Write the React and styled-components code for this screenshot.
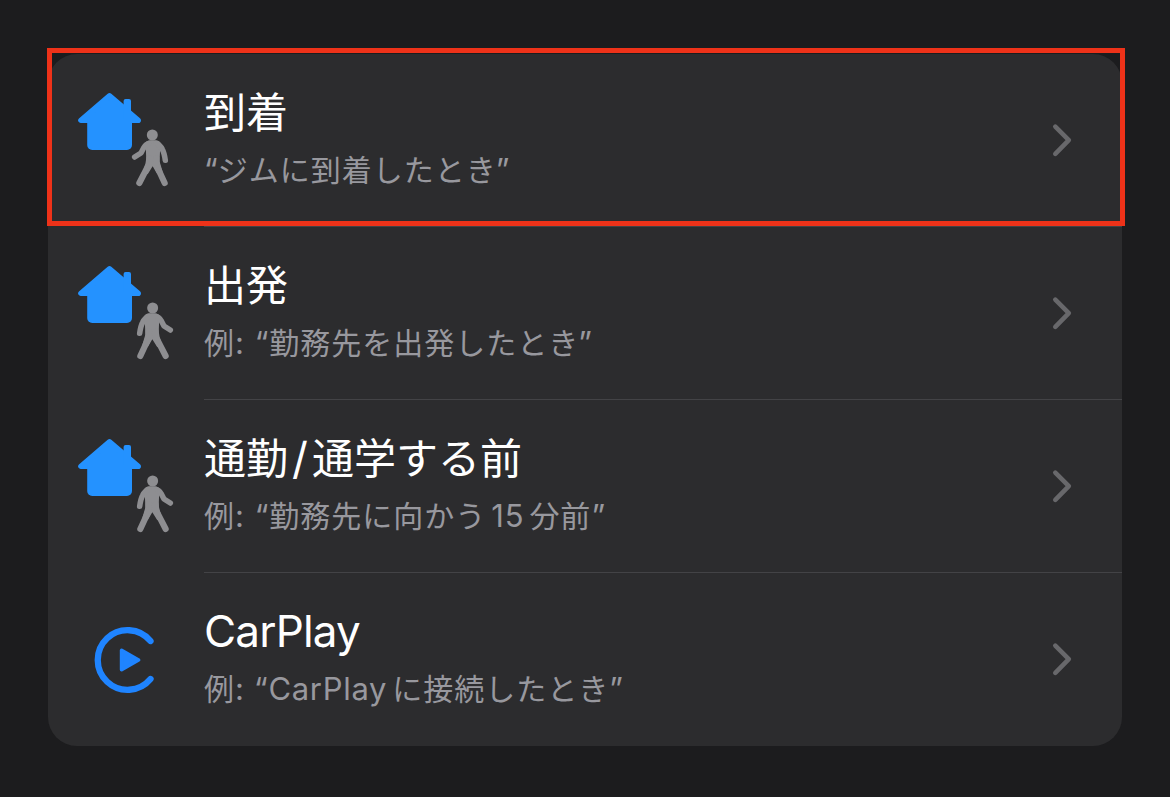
import React from 'react';
import styled, { createGlobalStyle } from 'styled-components';

const GlobalStyle = createGlobalStyle`
  * {
    box-sizing: border-box;
  }

  body {
    margin: 0;
    background: #1c1c1e;
    font-family: Inter, 'Noto Sans CJK JP', sans-serif;
  }
`;

const Page = styled.main`
  height: 797px;
  padding: 54px 48px 0;
  overflow: hidden;
`;

const List = styled.ul`
  position: relative;
  width: 1074px;
  margin: 0;
  padding: 0;
  list-style: none;
  background: #2c2c2e;
  border-radius: 29px;
`;

const Row = styled.li`
  display: flex;
  height: 173px;
`;

const Highlight = styled.div`
  position: absolute;
  top: -6px;
  left: -1px;
  width: 1078px;
  height: 178px;
  border: 5px solid #ee3219;
`;

const RowIcon = styled.svg`
  flex: none;
  width: 156px;
  height: 173px;
`;

const RowBody = styled.div`
  flex: 1;
  display: flex;
  align-items: center;
  justify-content: space-between;
  padding-right: 48px;
  border-bottom: 1px solid ${props => props.$last ? 'transparent' : '#434346'};
`;

const Labels = styled.div`
  display: flex;
  flex-direction: column;
  height: 173px;
  padding-top: 25px;
  white-space: pre;
`;

const Title = styled.div`
  height: 62px;
  line-height: 62px;
  font-family: 'Noto Sans CJK JP', sans-serif;
  font-size: 42px;
  color: #fff;
`;

const Subtitle = styled.div`
  height: 46px;
  margin-top: 4px;
  line-height: 46px;
  font-family: 'Noto Sans CJK JP', sans-serif;
  font-size: 30px;
  letter-spacing: 1px;
  color: #98989e;
`;

const Latin = styled.span`
  font-family: Inter, sans-serif;
  font-size: ${props => props.$size}px;
  letter-spacing: ${props => props.$track || 0}px;
  margin: 0 ${props => props.$right || 0}px 0 ${props => props.$left || 0}px;
`;

const Chevron = styled.svg`
  width: 24px;
  height: 36px;
`;

const House = () => (
    <g fill="#2492ff">
        <path d="M61.5 43 L33 67.3 H90.2 Z" stroke="#2492ff" strokeWidth="5.6" strokeLinejoin="round" />
        <rect x="75.6" y="46" width="7.4" height="22" rx="2" />
        <path d="M39.2 66 H84 V92 a5 5 0 0 1 -5 5 H44.2 a5 5 0 0 1 -5 -5 Z" />
    </g>
);

// drawn facing the house, three units to the pixel
const Walker = ({leaving}) => (
    <g
        transform={leaving ? 'scale(0.3333) translate(627 0) scale(-1 1)' : 'scale(0.3333)'}
        fill="none"
        stroke="#8e8e91"
        strokeWidth="16.5"
        strokeLinecap="round"
        strokeLinejoin="round"
    >
        <circle cx="313" cy="246" r="16.5" fill="#8e8e91" stroke="none" />
        <path d="M293 267 Q299 262 308 262 H322 Q331 262 337 268 L335 326 L344 356 L328 364 L314 340 L299 364 L284 356 L295 328 Z" fill="#8e8e91" stroke="none" />
        <path d="M303 271 Q294 273 288 283 L279 300 L260 312" />
        <path d="M325 271 Q336 275 343 289 Q349 300 352 322" />
        <path d="M304 316 Q303 336 295 349 L274 390" strokeWidth="18.5" />
        <path d="M325 316 Q325 338 332 351 L350 390" strokeWidth="18.5" />
    </g>
);

const CarPlay = () => (
    <g fill="none" stroke="#1f84ff" strokeLinecap="round" strokeLinejoin="round">
        <path d="M102.5 69 A29.8 29.8 0 1 0 102.5 107" strokeWidth="6.3" />
        <path d="M73.6 78.3 V97.7 L90.6 88 Z" fill="#1f84ff" strokeWidth="3.6" />
    </g>
);

const rows = [
    {
        id: 'arrive',
        icon: <><House /><Walker /></>,
        title: '到着',
        subtitle: <><Latin $size={31}>“</Latin>ジムに到着したとき<Latin $size={31} $left={-1}>”</Latin></>
    },
    {
        id: 'leave',
        icon: <><House /><Walker leaving /></>,
        title: '出発',
        subtitle: <>例<Latin $size={31} $track={1}>: “</Latin>勤務先を出発したとき<Latin $size={31} $left={-1}>”</Latin></>
    },
    {
        id: 'commute',
        icon: <><House /><Walker leaving /></>,
        title: <>通勤<Latin $size={44} $left={4} $right={4}>/</Latin>通学する前</>,
        subtitle: <>例<Latin $size={31} $track={1}>: “</Latin>勤務先に向かう<Latin $size={31} $track={0.8} $left={5} $right={5}>15</Latin>分前<Latin $size={31}>”</Latin></>
    },
    {
        id: 'carplay',
        icon: <CarPlay />,
        title: <Latin $size={44} $track={-0.8}>CarPlay</Latin>,
        subtitle: <>例<Latin $size={31} $track={0.7} $right={5}>: “CarPlay</Latin>に接続したとき<Latin $size={31}>”</Latin></>
    }
];

const TriggerRow = ({row, last}) => (
    <Row>
        <RowIcon viewBox="0 1 156 173">{row.icon}</RowIcon>
        <RowBody $last={last}>
            <Labels>
                <Title>{row.title}</Title>
                <Subtitle>{row.subtitle}</Subtitle>
            </Labels>
            <Chevron viewBox="0 0 24 36">
                <path d="M5.3 4.6 L18.8 18.2 L5.3 31.8" fill="none" stroke="#68686b" strokeWidth="4.6" strokeLinecap="round" strokeLinejoin="round" />
            </Chevron>
        </RowBody>
    </Row>
);

const App = () => (
    <Page>
        <GlobalStyle />
        <List>
            {rows.map((row, i) => <TriggerRow row={row} last={i === rows.length - 1} key={row.id} />)}
            <Highlight />
        </List>
    </Page>
);

export default App;
